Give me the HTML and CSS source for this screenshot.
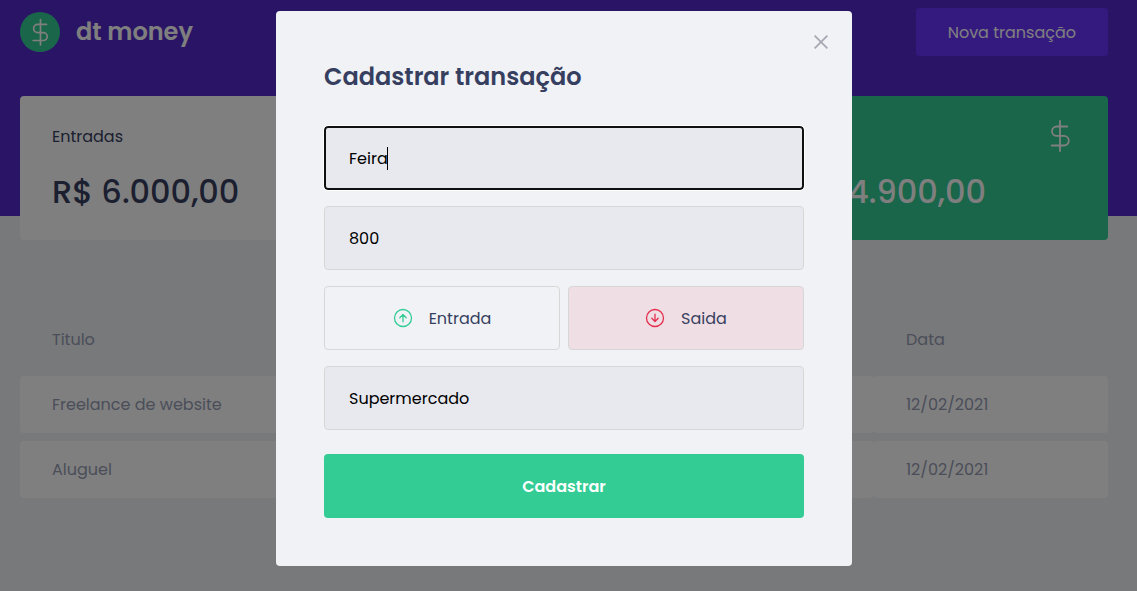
FILE: index.html
```html
<!DOCTYPE html>
<html lang="pt-BR">
<head>
<meta charset="utf-8">
<meta name="viewport" content="width=device-width, initial-scale=1">
<title>dt money</title>
<link rel="stylesheet" href="styles.css">
</head>
<body>
<header class="header">
  <div class="container header-content">
    <div class="brand">
      <svg class="brand-logo" viewBox="0 0 40 40" aria-hidden="true">
        <circle cx="20" cy="20" r="20" fill="#33cc95"/>
        <path d="M20.500 7.500v25.500M26.500 12.400h-8.800a4.100 4.100 0 0 0 0 8.200h5.600a3.900 3.900 0 0 1 0 7.900H13.200" fill="none" stroke="#fff" stroke-width="1.700" stroke-linecap="round"/>
      </svg>
      <span class="brand-name">dt money</span>
    </div>
    <button class="new-button" type="button">Nova transação</button>
  </div>
</header>
<main class="main">
  <div class="container">
    <section class="summary">
      <article class="card">
        <div class="card-head"><span>Entradas</span></div>
        <strong class="card-value">R$ 6.000,00</strong>
      </article>
      <article class="card">
        <div class="card-head"><span>Saídas</span></div>
        <strong class="card-value">R$ 1.100,00</strong>
      </article>
      <article class="card card-total">
        <div class="card-head">
          <span>Total</span>
          <svg class="card-icon" viewBox="0 0 32 32" aria-hidden="true"><path d="M16 1v30M23.300 6.500H12.700a4.700 4.700 0 0 0 0 9.400h7.300a4.800 4.800 0 0 1 0 9.600H7.700" fill="none" stroke="#fff" stroke-width="1.800" stroke-linecap="round"/></svg>
        </div>
        <strong class="card-value">R$ 4.900,00</strong>
      </article>
    </section>
    <table class="transactions">
      <thead>
        <tr><th class="col-title">Titulo</th><th class="col-value">Valor</th><th>Categoria</th><th class="col-date">Data</th></tr>
      </thead>
      <tbody>
        <tr><td>Freelance de website</td><td>R$ 6.000,00</td><td>Dev</td><td>12/02/2021</td></tr>
        <tr><td>Aluguel</td><td>R$ 1.100,00</td><td>Casa</td><td>12/02/2021</td></tr>
      </tbody>
    </table>
  </div>
</main>
<div class="overlay">
  <div class="modal" role="dialog" aria-modal="true" aria-labelledby="modal-title">
    <button class="close" type="button" aria-label="Fechar">
      <svg viewBox="0 0 14 14" aria-hidden="true"><path d="M.6.6l12.800 12.800M13.400.6L.6 13.400" fill="none" stroke="#a8a8b3" stroke-width="1.800"/></svg>
    </button>
    <form>
      <h2 class="modal-title" id="modal-title">Cadastrar transação</h2>
      <div class="field">
        <input class="input input-active" type="text" value="Feira" aria-label="Título">
        <span class="caret"></span>
      </div>
      <div class="field"><input class="input" type="text" inputmode="numeric" value="800" aria-label="Valor"></div>
      <div class="types">
        <button class="type" type="button">
          <svg class="type-icon income" viewBox="0 0 20 20" aria-hidden="true"><circle cx="10" cy="10" r="8.500"/><path d="M10 13.800V6.600M6.800 9.700L10 6.500l3.200 3.200"/></svg>
          <span>Entrada</span>
        </button>
        <button class="type type-selected" type="button" aria-pressed="true">
          <svg class="type-icon outcome" viewBox="0 0 20 20" aria-hidden="true"><circle cx="10" cy="10" r="8.500"/><path d="M10 6.200v7.200M6.800 10.300l3.200 3.200 3.200-3.200"/></svg>
          <span>Saida</span>
        </button>
      </div>
      <div class="field"><input class="input" type="text" value="Supermercado" aria-label="Categoria"></div>
      <button class="submit" type="submit">Cadastrar</button>
    </form>
  </div>
</div>
</body>
</html>
```
FILE: styles.css
```css
:root {
  --green: #33cc95;
  --red: #e52e4d;
  --title: #363f5f;
  --text: #969cb3;
  --background: #f0f2f5;
  --gutter: 9px;
}

* {
  margin: 0;
  padding: 0;
  box-sizing: border-box;
}

body {
  min-height: 100vh;
  overflow: hidden;
  background: var(--background);
}

body, input, button {
  font-family: "Poppins", "Inter", sans-serif;
  font-size: 16px;
  font-weight: 400;
}

button {
  border: 0;
  cursor: pointer;
}

.header {
  padding: 8px var(--gutter) 160px 0;
  background: #5429cc;
}

.container {
  max-width: 1120px;
  margin: 0 auto;
  padding: 0 16px;
}

.header-content {
  display: flex;
  align-items: center;
  justify-content: space-between;
}

.brand {
  display: flex;
  align-items: center;
  gap: 16px;
  color: #fff;
}

.brand-logo {
  width: 40px;
  height: 40px;
}

.brand-name {
  font-size: 24px;
  font-weight: 600;
  line-height: 36px;
}

.new-button {
  height: 48px;
  padding: 0 32px;
  border-radius: 4px;
  background: #6933ff;
  color: #fff;
}

.main {
  margin-top: -120px;
  padding-right: var(--gutter);
}

.summary {
  display: grid;
  grid-template-columns: repeat(3, 1fr);
  gap: 32px;
}

.card {
  padding: 24px 32px;
  border-radius: 4px;
  background: #fff;
  color: var(--title);
}

.card-total {
  background: var(--green);
  color: #fff;
}

.card-head {
  display: flex;
  align-items: center;
  justify-content: space-between;
  height: 32px;
}

.card-icon {
  width: 32px;
  height: 32px;
}

.card-value {
  display: block;
  margin-top: 16px;
  font-size: 32px;
  font-weight: 500;
  line-height: 48px;
}

.transactions {
  width: 100%;
  margin-top: 63px;
  border-spacing: 0 8px;
  color: var(--text);
}

.transactions th,
.transactions td {
  padding: 16px 32px;
  font-weight: 400;
  line-height: 25px;
  text-align: left;
}

.transactions td {
  border-radius: 4px;
  background: #fff;
}

.col-title {
  width: 326px;
}

.col-value {
  width: 360px;
}

.col-date {
  width: 234px;
}

.overlay {
  position: fixed;
  inset: 0;
  display: flex;
  align-items: center;
  justify-content: center;
  padding: 0 var(--gutter) 14px 0;
  background: rgba(0, 0, 0, 0.5);
}

.modal {
  position: relative;
  width: 100%;
  max-width: 576px;
  padding: 48px;
  border-radius: 4px;
  background: var(--background);
}

.close {
  position: absolute;
  top: 24px;
  right: 24px;
  display: flex;
  background: transparent;
}

.close svg {
  width: 14px;
  height: 14px;
}

.modal-title {
  margin-bottom: 32px;
  color: var(--title);
  font-size: 24px;
  font-weight: 600;
  line-height: 35px;
}

.field {
  position: relative;
  margin-bottom: 16px;
}

.input {
  display: block;
  width: 100%;
  height: 64px;
  padding: 0 24px;
  border: 1px solid #d7d7d7;
  border-radius: 4px;
  background: #e7e9ee;
  color: #000;
}

.input-active {
  padding: 0 23px;
  border: 2px solid #101010;
  outline: 1px solid #fff;
}

.caret {
  position: absolute;
  top: 21px;
  left: 63px;
  width: 1px;
  height: 23px;
  background: #000;
}

.types {
  display: grid;
  grid-template-columns: 1fr 1fr;
  gap: 8px;
  margin-bottom: 16px;
}

.type {
  display: flex;
  align-items: center;
  justify-content: center;
  gap: 16px;
  height: 64px;
  border: 1px solid #d7d7d7;
  border-radius: 4px;
  background: transparent;
  color: var(--title);
}

.type-selected {
  background: #efdee4;
}

.type-icon {
  width: 20px;
  height: 20px;
  fill: none;
  stroke-width: 1.3;
  stroke-linecap: round;
  stroke-linejoin: round;
}

.income {
  stroke: var(--green);
}

.outcome {
  stroke: var(--red);
}

.submit {
  width: 100%;
  height: 64px;
  margin-top: 8px;
  border-radius: 4px;
  background: var(--green);
  color: #fff;
  font-weight: 600;
}
```
